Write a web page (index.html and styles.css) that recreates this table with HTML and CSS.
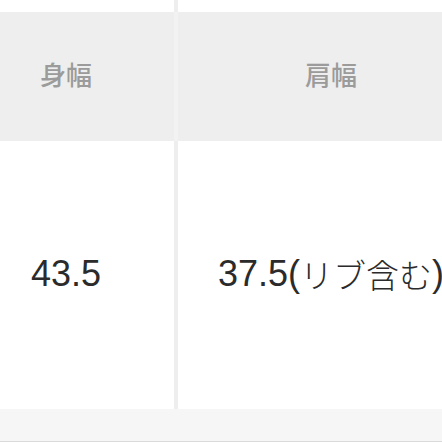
FILE: index.html
```html
<!DOCTYPE html>
<html lang="ja">
<head>
<meta charset="utf-8">
<link rel="stylesheet" href="styles.css">
</head>
<body>
<div class="sheet">
  <div class="row row-top">
    <div class="cell cell-left"></div>
    <div class="cell"></div>
  </div>
  <div class="row row-head">
    <div class="cell cell-left">身幅</div>
    <div class="cell">肩幅</div>
  </div>
  <div class="row row-body">
    <div class="cell cell-left">43.5</div>
    <div class="cell">37.5(<span class="jp">リブ含む</span>)</div>
  </div>
  <div class="row-foot"></div>
</div>
</body>
</html>
```
FILE: styles.css
```css
html, body {
  margin: 0;
  padding: 0;
  background: #ffffff;
  overflow: hidden;
}
.sheet {
  width: 526px;
  margin-left: -42px;
  display: flex;
  flex-direction: column;
}
.row {
  display: grid;
  grid-template-columns: 220px 306px;
}
.cell {
  display: flex;
  align-items: center;
  justify-content: center;
  white-space: nowrap;
}
.cell-left {
  border-right: 4px solid #eeeeee;
}
.row-top {
  height: 12px;
}
.row-head {
  height: 129px;
  background: #eeeeee;
  color: #9b9b9b;
  font-family: "Noto Sans CJK JP", sans-serif;
  font-size: 26px;
  font-weight: 500;
}
.row-head .cell {
  padding-bottom: 6px;
}
.row-head .cell-left {
  border-right-color: #f2f2f2;
}
.row-body {
  height: 268px;
  color: #2b2b2b;
  font-family: "Liberation Sans", "Noto Sans CJK JP", sans-serif;
  font-size: 36px;
}
.row-body .cell {
  padding-bottom: 2px;
}
.jp {
  font-family: "Noto Sans CJK JP", sans-serif;
  font-size: 33px;
  font-weight: 300;
}
.row-foot {
  height: 32px;
  background: #f6f6f6;
  border-bottom: 1px solid #dadada;
}
```
